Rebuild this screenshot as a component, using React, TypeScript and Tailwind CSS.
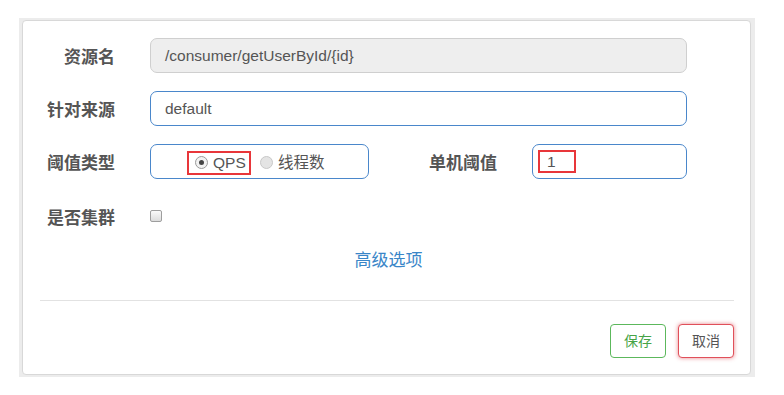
import React from "react";

const font = { fontFamily: '"Liberation Sans", "Noto Sans CJK SC", sans-serif' };

const Label = ({ text, w = "w-[92px]" }: { text: string; w?: string }) => (
  <div className={`${w} shrink-0 text-right mr-[35px] pt-[4px] text-[17px] font-bold text-[#555]`}>{text}</div>
);

const App = () => {
  return (
    <div className="w-[784px] h-[395px] bg-white pt-[18px] pl-[19px]" style={font}>
      <div className="w-[736px] h-[359px] bg-[#ececec] pt-[2px] pl-[3px] pr-[4px] pb-[2px]">
        <div className="h-full bg-white border border-[#d8d8d8] rounded-[4px] flex flex-col">
          <div className="pt-[17px] flex flex-col">
            {/* 资源名 */}
            <div className="flex items-center h-[35px]">
              <Label text="资源名" />
              <div className="w-[537px] h-[35px] rounded-[7px] border border-[#cfcfcf] bg-[#eeeeee] px-[14px] pt-[1px] flex items-center text-[15.5px] text-[#555]">
                /consumer/getUserById/{"{id}"}
              </div>
            </div>
            {/* 针对来源 */}
            <div className="flex items-center h-[35px] mt-[18px]">
              <Label text="针对来源" />
              <div className="w-[537px] h-[35px] rounded-[7px] border border-[#4a87cb] bg-white px-[14px] pt-[1px] flex items-center text-[15.5px] text-[#555]">
                default
              </div>
            </div>
            {/* 阈值类型 */}
            <div className="flex items-center h-[35px] mt-[18px]">
              <Label text="阈值类型" />
              <div className="w-[219px] h-[35px] rounded-[7px] border border-[#4a87cb] bg-white pl-[36px] pt-[2px] flex items-center text-[15.5px] text-[#555]">
                <div className="w-[64px] h-[24px] border-2 border-[#e8363a] flex items-center pl-[6px]">
                  <span className="w-[13px] h-[13px] rounded-full border border-[#9a9a9a] bg-[#f2f2f2] flex items-center justify-center">
                    <span className="w-[5px] h-[5px] rounded-full bg-[#444]" />
                  </span>
                  <span className="ml-[5px]">QPS</span>
                </div>
                <span className="ml-[9px] w-[13px] h-[13px] rounded-full border border-[#c8c8c8] bg-[#e4e4e4]" />
                <span className="ml-[5px]">线程数</span>
              </div>
              <Label text="单机阈值" w="w-[128px]" />
              <div className="w-[155px] h-[35px] rounded-[7px] border border-[#4a87cb] bg-white pl-[5px] flex items-center text-[15.5px] text-[#555]">
                <div className="w-[38px] h-[23px] border-2 border-[#e8363a] flex items-center pl-[7px]">1</div>
              </div>
            </div>
            {/* 是否集群 */}
            <div className="flex items-center h-[35px] mt-[20px]">
              <Label text="是否集群" />
              <span className="w-[12px] h-[12px] -mt-[2px] rounded-[2px] border border-[#9e9e9e] bg-gradient-to-b from-[#fafafa] to-[#dcdcdc]" />
            </div>
            {/* 高级选项 */}
            <div className="h-[52px] pt-[2px] flex items-center justify-center text-[17px] text-[#3a86c8] pl-[4px]">高级选项</div>
          </div>
          <div className="mt-[14px] ml-[17px] mr-[16px] border-t border-[#e2e2e2]" />
          <div className="mt-[23px] mr-[16px] flex justify-end gap-[12px]">
            <button className="w-[56px] h-[34px] rounded-[4px] border-[1.5px] border-[#5cb85c] bg-white text-[14px] text-[#47a447]">
              保存
            </button>
            <button className="w-[56px] h-[34px] rounded-[4px] border-[1.5px] border-[#e0505a] bg-white text-[14px] text-[#555] shadow-[0_0_4px_rgba(224,80,90,0.7)]">
              取消
            </button>
          </div>
        </div>
      </div>
    </div>
  );
};

export default App;
